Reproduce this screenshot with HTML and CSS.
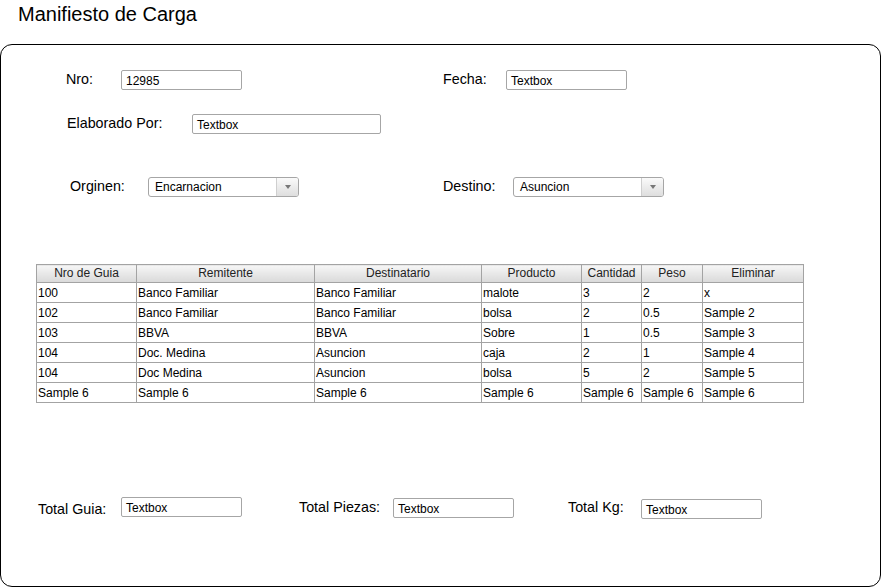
FILE: index.html
```html
<!DOCTYPE html>
<html lang="es">
<head>
<meta charset="utf-8">
<title>Manifiesto de Carga</title>
<link rel="stylesheet" href="styles.css">
</head>
<body>
<h1 class="title">Manifiesto de Carga</h1>
<div class="panel">
  <div class="row row1">
    <div class="field">
      <span class="label lbl-nro">Nro:</span>
      <div class="textbox w120">12985</div>
    </div>
    <div class="field fecha">
      <span class="label lbl-fecha">Fecha:</span>
      <div class="textbox w120">Textbox</div>
    </div>
  </div>
  <div class="row row2">
    <div class="field">
      <span class="label lbl-elab">Elaborado Por:</span>
      <div class="textbox w188">Textbox</div>
    </div>
  </div>
  <div class="row row3">
    <div class="field">
      <span class="label lbl-origen">Orginen:</span>
      <div class="select"><span class="select-text">Encarnacion</span><span class="select-btn"><span class="arrow"></span></span></div>
    </div>
    <div class="field destino">
      <span class="label lbl-destino">Destino:</span>
      <div class="select"><span class="select-text">Asuncion</span><span class="select-btn"><span class="arrow"></span></span></div>
    </div>
  </div>

  <table class="grid">
    <colgroup>
      <col class="c1"><col class="c2"><col class="c3"><col class="c4"><col class="c5"><col class="c6"><col class="c7">
    </colgroup>
    <thead>
      <tr><th>Nro de Guia</th><th>Remitente</th><th>Destinatario</th><th>Producto</th><th>Cantidad</th><th>Peso</th><th>Eliminar</th></tr>
    </thead>
    <tbody>
      <tr><td>100</td><td>Banco Familiar</td><td>Banco Familiar</td><td>malote</td><td>3</td><td>2</td><td>x</td></tr>
      <tr><td>102</td><td>Banco Familiar</td><td>Banco Familiar</td><td>bolsa</td><td>2</td><td>0.5</td><td>Sample 2</td></tr>
      <tr><td>103</td><td>BBVA</td><td>BBVA</td><td>Sobre</td><td>1</td><td>0.5</td><td>Sample 3</td></tr>
      <tr><td>104</td><td>Doc. Medina</td><td>Asuncion</td><td>caja</td><td>2</td><td>1</td><td>Sample 4</td></tr>
      <tr><td>104</td><td>Doc Medina</td><td>Asuncion</td><td>bolsa</td><td>5</td><td>2</td><td>Sample 5</td></tr>
      <tr><td>Sample 6</td><td>Sample 6</td><td>Sample 6</td><td>Sample 6</td><td>Sample 6</td><td>Sample 6</td><td>Sample 6</td></tr>
    </tbody>
  </table>

  <div class="row totals">
    <div class="field">
      <span class="label lbl-tguia">Total Guia:</span>
      <div class="textbox w120">Textbox</div>
    </div>
    <div class="field tpiezas">
      <span class="label lbl-tpiezas">Total Piezas:</span>
      <div class="textbox w120">Textbox</div>
    </div>
    <div class="field tkg">
      <span class="label lbl-tkg">Total Kg:</span>
      <div class="textbox w120">Textbox</div>
    </div>
  </div>
</div>
</body>
</html>
```
FILE: styles.css
```css
html, body {
  margin: 0;
  padding: 0;
  background: #ffffff;
}
body {
  font-family: "Liberation Sans", Arial, sans-serif;
  color: #000;
  width: 882px;
  height: 588px;
  overflow: hidden;
}
.title {
  margin: 0;
  height: 44px;
  padding: 3px 0 0 18px;
  box-sizing: border-box;
  font-size: 20px;
  font-weight: normal;
  line-height: 23px;
}
.panel {
  width: 881px;
  height: 543px;
  box-sizing: border-box;
  border: 1px solid #000;
  border-radius: 12px;
}
.row {
  display: flex;
  align-items: center;
  height: 20px;
}
.field {
  display: flex;
  align-items: center;
}
.label {
  font-size: 14.3px;
  line-height: 16px;
  margin-top: -3px;
  white-space: nowrap;
}
.textbox {
  height: 20px;
  box-sizing: border-box;
  border: 1px solid #a6a6a6;
  border-radius: 2px;
  font-size: 12px;
  line-height: 18px;
  padding: 1px 0 0 4px;
  white-space: nowrap;
  background: #fff;
}
.w120 { width: 121px; }
.w188 { width: 189px; }

.row1 { margin-top: 25px; padding-left: 65px; }
.lbl-nro { width: 55px; }
.fecha { margin-left: 201px; }
.lbl-fecha { width: 63px; }

.row2 { margin-top: 24px; padding-left: 66px; }
.lbl-elab { width: 125px; }

.row3 { margin-top: 43px; padding-left: 69px; }
.lbl-origen { width: 78px; }
.destino { margin-left: 144px; }
.lbl-destino { width: 70px; }

.select {
  width: 151px;
  height: 20px;
  box-sizing: border-box;
  border: 1px solid #a6a6a6;
  border-radius: 3px;
  display: flex;
  background: #fff;
  overflow: hidden;
}
.select-text {
  flex: 1;
  font-size: 12px;
  line-height: 18px;
  padding-left: 6px;
}
.select-btn {
  width: 21px;
  border-left: 1px solid #cfcfcf;
  background: linear-gradient(#fafafa, #dedede);
  display: flex;
  align-items: center;
  justify-content: center;
}
.arrow {
  width: 0;
  height: 0;
  border-left: 3px solid transparent;
  border-right: 3px solid transparent;
  border-top: 4px solid #777;
}

.grid {
  margin: 67px 0 0 35px;
  width: 767px;
  table-layout: fixed;
  border-collapse: collapse;
  font-size: 12px;
}
.c1 { width: 100px; }
.c2 { width: 178px; }
.c3 { width: 167px; }
.c4 { width: 100px; }
.c5 { width: 60px; }
.c6 { width: 61px; }
.c7 { width: 101px; }
.grid th,
.grid td {
  border: 1px solid #a3a3a3;
  padding: 0 0 0 1px;
  white-space: nowrap;
  overflow: hidden;
  text-align: left;
}
.grid th {
  height: 17px;
  line-height: 17px;
  font-weight: normal;
  color: #222;
  text-align: center;
  padding: 0;
  background: linear-gradient(#f6f6f6, #d9d9d9);
}
.grid td {
  height: 18px;
  line-height: 18px;
  padding-top: 1px;
}

.totals { margin-top: 94px; padding-left: 37px; align-items: flex-start; height: 22px; }
.totals .label { margin-top: 4px; }
.lbl-tguia { width: 83px; }
.tpiezas { margin-left: 57px; margin-top: 1px; }
.tpiezas .label { margin-top: 1px; }
.lbl-tpiezas { width: 94px; }
.tkg { margin-left: 54px; margin-top: 2px; }
.tkg .label { margin-top: 0px; }
.lbl-tkg { width: 73px; }
.totals .field { align-items: flex-start; }
```
